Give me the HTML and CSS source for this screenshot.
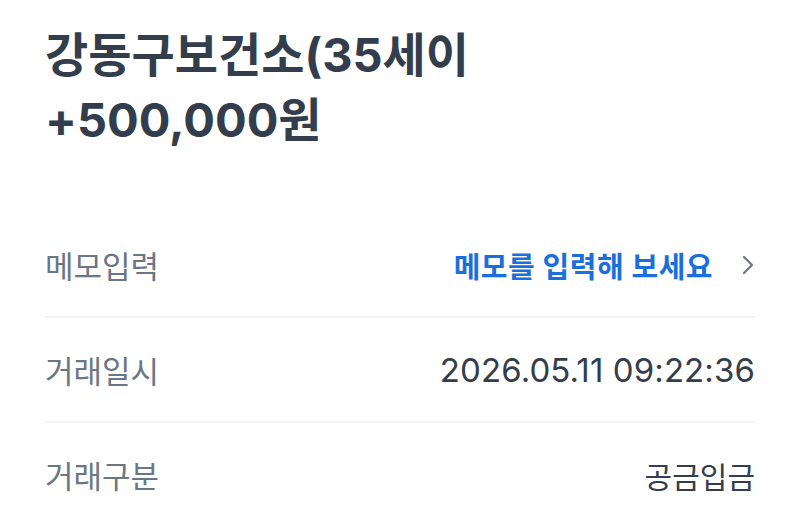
FILE: index.html
```html
<!DOCTYPE html>
<html lang="ko">
<head>
<meta charset="utf-8">
<link rel="stylesheet" href="styles.css">
</head>
<body>
<div class="page">
  <header class="head">
    <h1 class="title">강동구보건소(35세이</h1>
    <div class="amount">+500,000원</div>
  </header>
  <ul class="rows">
    <li class="row">
      <span class="label">메모입력</span>
      <span class="value link">메모를 입력해 보세요
        <svg class="chev" width="14" height="22" viewBox="0 0 14 22"><path d="M3 3 L11 11 L3 19" fill="none" stroke="#6b7684" stroke-width="2.2" stroke-linecap="round" stroke-linejoin="round"/></svg>
      </span>
    </li>
    <li class="row">
      <span class="label">거래일시</span>
      <span class="value num">2026.05.11 09:22:36</span>
    </li>
    <li class="row last">
      <span class="label">거래구분</span>
      <span class="value">공금입금</span>
    </li>
  </ul>
</div>
</body>
</html>
```
FILE: styles.css
```css
html, body {
  margin: 0;
  padding: 0;
  background: #ffffff;
}
body {
  font-family: Inter, "Noto Sans CJK KR", "Noto Sans", sans-serif;
  color: #333d4b;
}
.page {
  width: 800px;
  height: 521px;
  overflow: hidden;
  padding: 0 45px;
  box-sizing: border-box;
}
.head {
  padding-top: 22px;
}
.title, .amount {
  margin: 0;
  font-size: 47px;
  font-weight: 700;
  line-height: 65px;
  letter-spacing: 0;
  color: #333d4b;
}
.rows {
  list-style: none;
  margin: 61px 0 0;
  padding: 0;
}
.row {
  display: flex;
  justify-content: space-between;
  align-items: center;
  height: 103px;
  border-bottom: 2px solid #f2f4f6;
  font-size: 30px;
}
.row.last {
  border-bottom: none;
}
.label {
  color: #6b7684;
  font-size: 31px;
}
.value {
  color: #333d4b;
  display: flex;
  align-items: center;
}
.num {
  font-size: 33px;
  letter-spacing: 0.1px;
}
.link {
  color: #1b6fdc;
  font-weight: 700;
  font-size: 29px;
  letter-spacing: 0.5px;
}
.chev {
  margin-left: 28px;
}
```
